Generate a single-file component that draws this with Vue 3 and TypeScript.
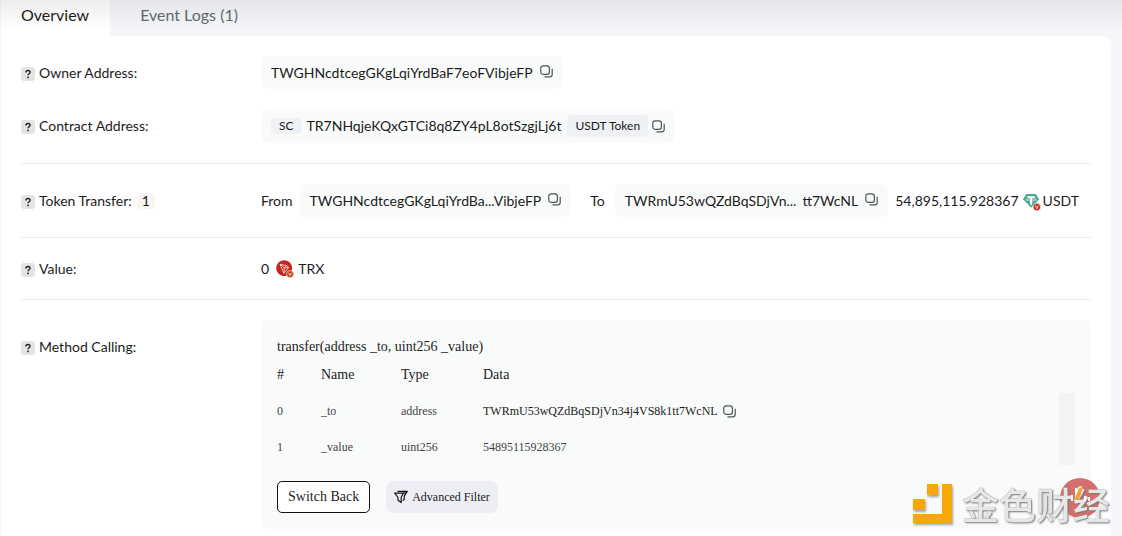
<script setup lang="ts">
import { h, type FunctionalComponent } from 'vue'

interface Param {
  name: string
  type: string
  data: string
  copyable: boolean
}

const params: Param[] = [
  { name: '_to', type: 'address', data: 'TWRmU53wQZdBqSDjVn34j4VS8k1tt7WcNL', copyable: true },
  { name: '_value', type: 'uint256', data: '54895115928367', copyable: false },
]

const CopyButton: FunctionalComponent = () =>
  h('button', { type: 'button', class: 'copy', 'aria-label': 'Copy' }, [
    h('svg', { viewBox: '0 0 13 13', width: 13, height: 13, fill: 'none', stroke: '#50545a', 'stroke-width': 1.2 }, [
      h('rect', { x: 0.8, y: 0.8, width: 8.6, height: 8.6, rx: 2.4 }),
      h('path', { d: 'M12.2 3.8v5.8a2.2 2.2 0 0 1-2.2 2.2H4.5' }),
    ]),
  ])

const HelpIcon: FunctionalComponent = () =>
  h('svg', { class: 'help', viewBox: '0 0 14 14', width: 14, height: 14, fill: 'none' }, [
    h('rect', { width: 14, height: 14, rx: 3, fill: '#e4e4e4' }),
    h('path', { d: 'M4.9 5.4c0-1.2.9-1.9 2.1-1.9s2.1.7 2.1 1.8c0 1.4-2.1 1.5-2.1 3', stroke: '#222', 'stroke-width': 1.4 }),
    h('circle', { cx: 7, cy: 10.4, r: 0.9, fill: '#222' }),
  ])
</script>

<template>
  <div class="page">
    <nav class="tabs">
      <button type="button" class="tab active">Overview</button>
      <button type="button" class="tab">Event Logs (1)</button>
    </nav>

    <main class="card">
      <section class="group">
        <div class="row">
          <div class="label"><HelpIcon />Owner Address:</div>
          <div class="value">
            <span class="chip"><a href="#">TWGHNcdtcegGKgLqiYrdBaF7eoFVibjeFP</a><CopyButton /></span>
          </div>
        </div>
        <div class="row">
          <div class="label"><HelpIcon />Contract Address:</div>
          <div class="value">
            <span class="chip contract">
              <span class="sc">SC</span>
              <a href="#">TR7NHqjeKQxGTCi8q8ZY4pL8otSzgjLj6t</a>
              <span class="token">USDT Token</span>
              <CopyButton />
            </span>
          </div>
        </div>
      </section>

      <section class="group">
        <div class="row">
          <div class="label"><HelpIcon />Token Transfer:<span class="count">1</span></div>
          <div class="value">
            <span class="from">From</span>
            <span class="chip"><a href="#">TWGHNcdtcegGKgLqiYrdBa...VibjeFP</a><CopyButton /></span>
            <span class="to">To</span>
            <span class="chip"><a href="#" class="split"><span>TWRmU53wQZdBqSDjVn...</span><span>tt7WcNL</span></a><CopyButton /></span>
            <span class="amount">54,895,115.928367</span>
            <svg class="coin" viewBox="0 0 18 18" width="18" height="18" fill="none">
              <path d="M3.4 1h9.4l3.4 5.3-8.1 8.5L0 6.3z" fill="#4fa994" />
              <path d="M4.4 3.2h7.6v2H9.2v6.6H7.1V5.200H4.400z" fill="#fff" />
              <path d="M6.800 6.100c-2.400.1-4 .5-4 .9 0 .5 2.300.9 5.300.9s5.300-.4 5.300-.9c0-.4-1.500-.8-3.900-.9" stroke="#fff" stroke-width=".5" />
              <circle cx="13.800" cy="14" r="3.800" fill="#c33025" stroke="#fff" stroke-width=".6" />
              <path d="m12.400 12.500 1.100 2.900h.6l1.100-2.900" stroke="#ffd9b8" stroke-width="1" />
            </svg>
            <a href="#">USDT</a>
          </div>
        </div>
      </section>

      <section class="group">
        <div class="row plain">
          <div class="label"><HelpIcon />Value:</div>
          <div class="value">
            <span>0</span>
            <svg class="coin trx" viewBox="0 0 18 18" width="18" height="18" fill="none">
              <circle cx="8.2" cy="8.2" r="8" fill="#c4271f" />
              <path d="m4 4.300 6.700 1.300 2 2-4.800 5.600zm0 0 4.400 3.600 4.300-.3M8.400 7.900l-.5 5.300M8.400 7.900l2.300-2.300" stroke="#fff" stroke-width=".7" stroke-linejoin="round" />
              <circle cx="14" cy="14.100" r="3.500" fill="#c33025" stroke="#ffd6a0" stroke-width=".8" />
              <path d="m12.600 12.700 1.100 2.800h.6l1.100-2.800" stroke="#ffd9b8" stroke-width="1" />
            </svg>
            <a href="#">TRX</a>
          </div>
        </div>
      </section>

      <section class="group">
        <div class="row method">
          <div class="label"><HelpIcon />Method Calling:</div>
          <div class="panel">
            <div class="signature">transfer(address _to, uint256 _value)</div>
            <div class="scroller">
              <table>
                <thead>
                  <tr><th class="idx">#</th><th class="name">Name</th><th class="type">Type</th><th>Data</th></tr>
                </thead>
                <tbody>
                  <tr v-for="(param, index) in params" :key="param.name">
                    <td>{{ index }}</td>
                    <td>{{ param.name }}</td>
                    <td>{{ param.type }}</td>
                    <td>
                      <span v-if="param.copyable" class="data"><a href="#">{{ param.data }}</a><CopyButton /></span>
                      <template v-else>{{ param.data }}</template>
                    </td>
                  </tr>
                </tbody>
              </table>
              <div class="track"></div>
            </div>
            <div class="actions">
              <button type="button" class="switch">Switch Back</button>
              <button type="button" class="filter">
                <svg viewBox="0 0 14 14" width="14" height="14" fill="none" stroke="#111" stroke-width="1.2" stroke-linejoin="round" stroke-linecap="round">
                  <path d="M.7 3.200 9.400 3 7.200 7.300v5.300L4 10.300V7.500z" />
                  <path d="M4 1.400h9.300l-3 4.400-.2 3.800-1 .8M9.400 3l2.300-.1" />
                </svg>
                Advanced Filter
              </button>
            </div>
          </div>
        </div>
      </section>
    </main>

    <div class="brand">
      <svg class="mark" viewBox="0 0 40 40" width="40" height="40" fill="#f8a70a">
        <path d="M14 0h11v11H14zM0 15h12v11H0zM29 0h10v39H0v-9h29z" />
      </svg>
      <span class="brand-name">金色财经</span>
      <svg class="badge" viewBox="0 0 40 40" width="40" height="40">
        <circle cx="20" cy="20" r="20" fill="#cf5552" fill-opacity=".85" />
      </svg>
      <svg class="badge bolt" viewBox="0 0 40 40" width="40" height="40" fill="none">
        <path d="M12 17v6M16 10v13M25 18v5M29 19v4" stroke="#fff" stroke-width="2" />
        <path d="m18 9 4-1-3 14h-5z" fill="#fff" />
        <path d="m19 10 4-1-4 13h-5z" fill="#eea63a" />
      </svg>
    </div>
  </div>
</template>

<style>
body {
  margin: 0;
  background: #f5f6fa;
  overflow: hidden;
}

.copy {
  display: inline-flex;
  padding: 0;
  border: 0;
  background: none;
  cursor: pointer;
}

.help {
  flex: none;
  margin: 2px 4px 0 0;
}
</style>

<style scoped>
.page {
  position: relative;
  padding: 0 11px 0 1px;
  font: 14px/20px Lato, "Noto Sans CJK SC", sans-serif;
  color: #1c1c1c;
}

.page::before {
  content: "";
  position: absolute;
  inset: 0 0 auto;
  height: 30px;
  background: linear-gradient(rgba(0, 0, 0, 0.07), rgba(0, 0, 0, 0));
  pointer-events: none;
}

a {
  color: inherit;
  text-decoration: none;
}

button {
  font: inherit;
  color: inherit;
  cursor: pointer;
}

.tabs {
  display: flex;
  height: 36px;
}

.tab {
  padding: 0 30px 6px;
  border: 0;
  background: none;
  font-size: 16px;
  color: #666a72;
}

.tab.active {
  padding: 0 21px 6px 20px;
  background: #fff;
  color: #1c1c1c;
}

.card {
  padding: 0 20px;
  background: #fff;
  border-radius: 0 10px 0 0;
}

.group {
  display: grid;
  gap: 20px;
  padding: 20px 0;
  border-bottom: 1px solid #e7eaeb;
}

.group:last-child {
  border: 0;
}

.row {
  display: grid;
  grid-template-columns: 240px 1fr;
  align-items: center;
}

.method {
  align-items: start;
}

.method .label {
  padding-top: 17px;
}

.label,
.value,
.chip {
  display: flex;
  align-items: center;
}

.value {
  white-space: nowrap;
}

.chip {
  height: 33px;
  padding: 0 10px;
  border-radius: 6px;
  background: #f9fbfa;
}

.contract {
  height: 34px;
}

.chip .copy {
  margin: 0 0 3px 7px;
}

.sc,
.token {
  background: #f0f1f4;
  border-radius: 4px;
  font-size: 12px;
}

.sc {
  height: 16px;
  padding: 0 8px;
  margin-right: 5px;
  line-height: 16px;
}

.token {
  height: 22px;
  padding: 0 8px;
  margin-left: 6px;
  line-height: 22px;
}

.contract .copy {
  margin: 0 0 0 4px;
}

.count {
  height: 16px;
  padding: 0 5px;
  margin-left: 5px;
  border-radius: 4px;
  background: #fbf4f2;
  line-height: 16px;
}

.from {
  margin-right: 7px;
}

.to {
  margin: 0 10px 0 19px;
}

.split {
  display: flex;
  gap: 6px;
}

.amount {
  margin-left: 7px;
}

.coin {
  margin: 2px 2px 0 4px;
}

.trx {
  margin: 0 4px 0 7px;
}

.plain {
  height: 21px;
}

.panel {
  padding: 16px;
  border-radius: 6px;
  background: #f9fbfa;
  font-family: "Liberation Serif", "Times New Roman", serif;
}

.signature {
  padding-top: 1px;
}

.scroller {
  display: grid;
  grid-template-columns: 1fr 16px;
}

.track {
  align-self: end;
  height: 72px;
  background: #f3f3f3;
}

table {
  border-collapse: collapse;
  table-layout: fixed;
  width: 100%;
}

th,
td {
  padding: 0;
  text-align: left;
}

th {
  height: 36px;
  font-weight: 400;
}

td {
  height: 36px;
  font-size: 12px;
  color: #444;
}

.idx {
  width: 44px;
}

.name {
  width: 80px;
}

.type {
  width: 82px;
}

.data {
  display: flex;
  align-items: center;
  gap: 5px;
  color: #1c1c1c;
}

.actions {
  display: flex;
  gap: 16px;
  margin-top: 16px;
}

.switch,
.filter {
  height: 32px;
  padding: 0 10px;
  border-radius: 5px;
}

.switch {
  border: 1px solid #111;
  background: #fff;
}

.filter {
  display: flex;
  align-items: center;
  gap: 4px;
  padding: 0 8px;
  border: 0;
  border-radius: 8px;
  background: #edeef5;
  font-size: 12px;
}

.brand {
  position: fixed;
  right: 12px;
  bottom: 10px;
  display: flex;
  align-items: center;
  gap: 9px;
}

.mark {
  filter: drop-shadow(1px 2px 1px rgba(0, 0, 0, 0.35));
}

.brand-name {
  z-index: 1;
  font: 500 37px/44px "Noto Sans CJK SC", sans-serif;
  color: #e6e6e6;
  text-shadow: 1px 1px 2px #777, 0 0 1px #888;
}

.badge {
  position: absolute;
  right: 10px;
  top: -4px;
}

.bolt {
  z-index: 2;
}
</style>
